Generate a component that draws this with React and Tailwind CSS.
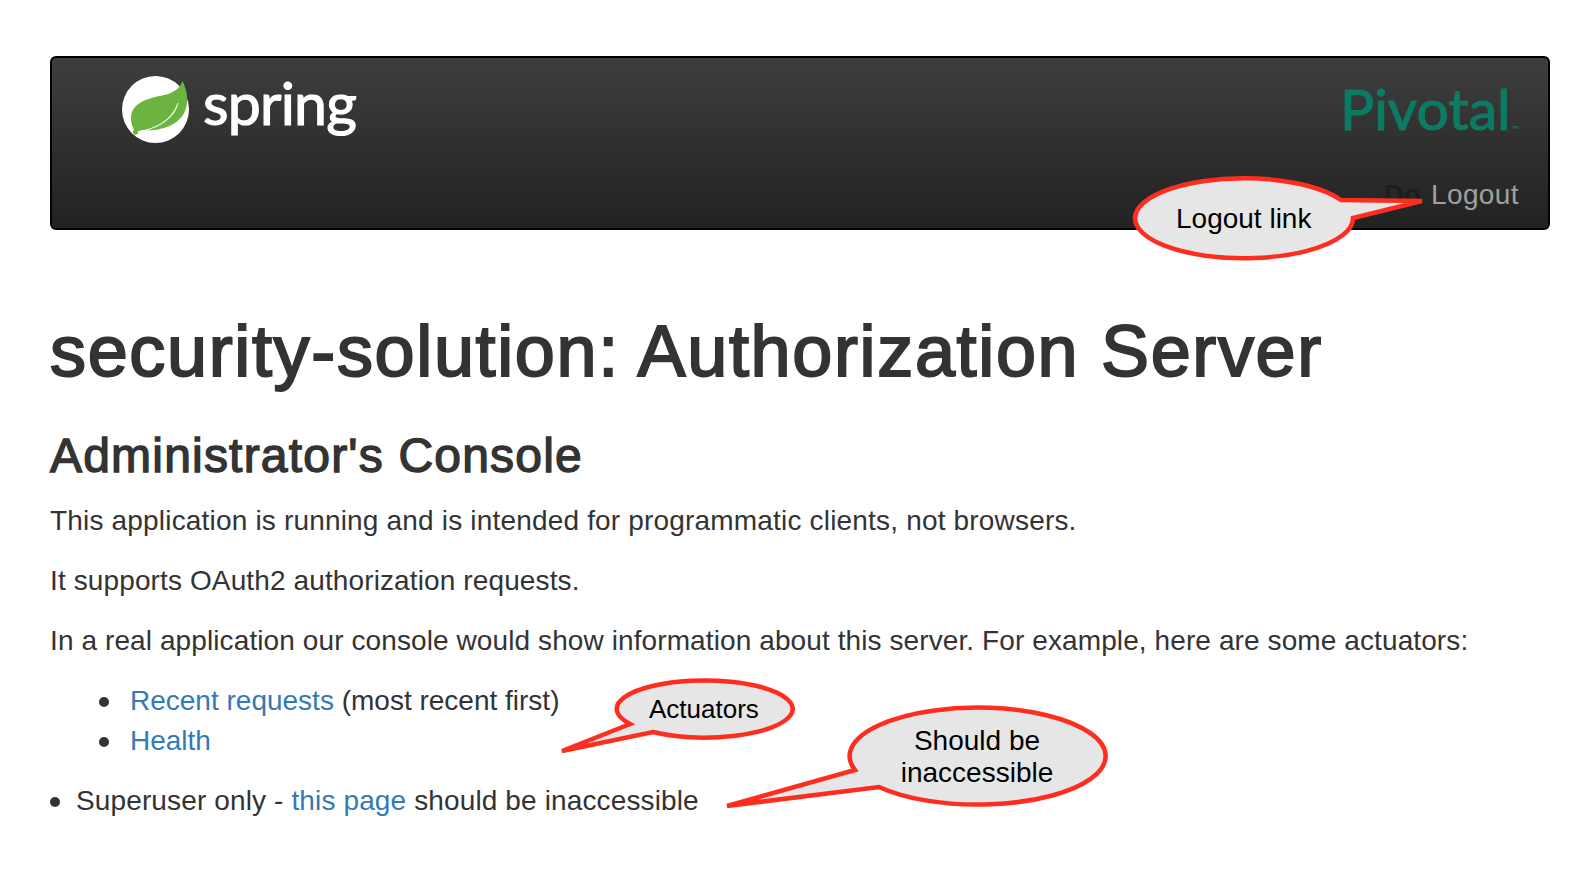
import React from "react";

const sans = "font-['Liberation_Sans',Arial,sans-serif]";
const linkColor = "text-[#337ab7]";

function SpringLeaf() {
  return (
    <svg width="67" height="67" viewBox="0 0 67 67" className="shrink-0">
      <circle cx="33.5" cy="33.5" r="33.5" fill="#fff" />
      <path
        d="M60.5 5C58 13 50 18 38 20C22 23 9 29 9 42C9 48 11 53 14 56L20 54C40 56 60 48 64 32C67 22 64 12 60.5 5Z"
        fill="#6db33f"
      />
      <path d="M15 56C34 53 50 44 56 27C53 42 36 53 15 56Z" fill="#fff" stroke="#fff" strokeWidth="0.6" />
      <circle cx="13.5" cy="56" r="2.6" fill="#6db33f" />
    </svg>
  );
}

function Callouts() {
  return (
    <svg className="absolute inset-0 pointer-events-none" width="1594" height="870" viewBox="0 0 1594 870">
      <g fill="#e6e6e6" stroke="#ff2d1f" strokeWidth="4.5">
        <path d="M1341 200A109 40 0 1 0 1353 218L1422 201Z" />
        <path d="M630 724A88 28.5 0 1 1 653 732L562 751Z" />
        <path d="M855 770A128 48.5 0 1 1 879 787L727 806Z" />
      </g>
    </svg>
  );
}

export default function App() {
  return (
    <div className={`relative min-h-screen overflow-hidden bg-white pl-[50px] pr-[44px] pt-[56px] text-[#333] ${sans}`}>
      <header className="flex h-[174px] justify-between rounded-[6px] border-2 border-black bg-gradient-to-b from-[#3e3e3e] to-[#222]">
        <div className="flex items-start gap-[14px] pl-[70px] pt-[18px]">
          <SpringLeaf />
          <span className="-mt-[2px] font-['Lato',sans-serif] text-[59px] leading-[58px] tracking-[-0.8px] text-white [-webkit-text-stroke:1.2px_#fff]">spring</span>
        </div>
        <div className="flex flex-col items-end pr-[29px]">
          <div className="mt-[18px] flex items-end font-['Lato',sans-serif] text-[#0c7b63]">
            <span className="text-[57px] leading-[64px] [-webkit-text-stroke:1.2px_#0c7b63]">Pivotal</span>
            <span className="mb-[7px] ml-[1px] text-[10px] leading-[8px]">™</span>
          </div>
          <div className="mt-[35px] flex gap-[10px] text-[28px] leading-[40px]">
            <span className="font-bold text-[#1d1d1d]">Do</span>
            <span className="tracking-[0.4px] text-[#a0a0a0]">Logout</span>
          </div>
        </div>
      </header>

      <h1 className="mt-[78px] text-[72px] leading-[86px] tracking-[1.65px] [-webkit-text-stroke:2px_#333]">security-solution: Authorization Server</h1>
      <h2 className="mt-[34px] text-[48px] leading-[56px] tracking-[1.2px] [-webkit-text-stroke:1.4px_#333]">Administrator's Console</h2>

      <div className="mt-[17px] text-[28px] leading-[40px]">
        <p className="mb-[20px] tracking-[0.18px]">This application is running and is intended for programmatic clients, not browsers.</p>
        <p className="mb-[20px] tracking-[0.12px]">It supports OAuth2 authorization requests.</p>
        <p className="mb-[20px] tracking-[0.1px]">In a real application our console would show information about this server. For example, here are some actuators:</p>
        <ul className="mb-[20px] pl-[80px]">
          <li className="relative before:absolute before:left-[-31px] before:top-[16px] before:size-[10px] before:rounded-full before:bg-[#333]">
            <a className={linkColor}>Recent requests</a> (most recent first)
          </li>
          <li className="relative before:absolute before:left-[-31px] before:top-[16px] before:size-[10px] before:rounded-full before:bg-[#333]">
            <a className={linkColor}>Health</a>
          </li>
        </ul>
        <ul className="pl-[26px]">
          <li className="relative tracking-[0.13px] before:absolute before:left-[-26px] before:top-[16px] before:size-[10px] before:rounded-full before:bg-[#333]">
            Superuser only - <a className={linkColor}>this page</a> should be inaccessible
          </li>
        </ul>
      </div>

      <Callouts />
      <span className="absolute left-[1176px] top-[203px] text-[28px] leading-[32px] text-black">Logout link</span>
      <span className="absolute left-[649px] top-[693px] text-[26px] leading-[32px] text-black">Actuators</span>
      <span className="absolute left-[877px] top-[725px] w-[200px] text-center text-[28px] leading-[32px] text-black">Should be inaccessible</span>
    </div>
  );
}
